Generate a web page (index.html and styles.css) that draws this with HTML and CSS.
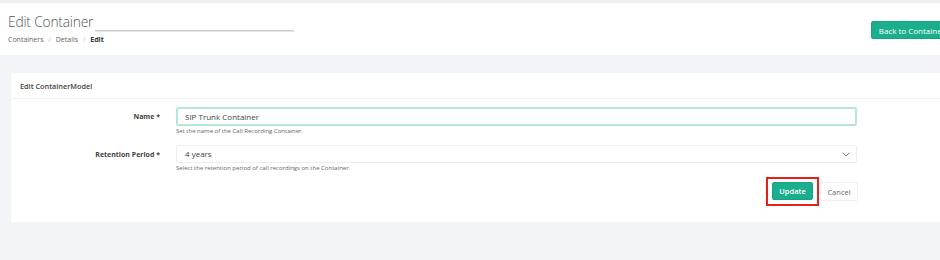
FILE: index.html
```html
<!DOCTYPE html>
<html lang="en">
<head>
<meta charset="utf-8">
<title>Edit Container</title>
<link rel="stylesheet" href="styles.css">
</head>
<body>
<div class="page">
  <div class="topline"></div>
  <header class="page-header">
    <div class="heading">
      <div class="title-row">
        <h1 class="title">Edit Container</h1>
        <span class="title-field"></span>
      </div>
      <nav class="crumbs">
        <a class="crumb">Containers</a>
        <span class="sep">/</span>
        <a class="crumb">Details</a>
        <span class="sep">/</span>
        <span class="crumb current">Edit</span>
      </nav>
    </div>
    <button class="btn btn-primary back-btn">Back to Container</button>
  </header>
  <main class="content">
    <section class="card">
      <div class="card-header">Edit ContainerModel</div>
      <form class="card-body">
        <div class="form-row">
          <label class="form-label">Name *</label>
          <div class="form-field">
            <div class="input input-focus">SIP Trunk Container</div>
            <div class="help">Set the name of the Call Recording Container.</div>
          </div>
        </div>
        <div class="form-row">
          <label class="form-label">Retention Period *</label>
          <div class="form-field">
            <div class="input select">
              <span>4 years</span>
              <svg class="chevron" width="8" height="5" viewBox="0 0 8 5"><path d="M0.5 0.7 L4 4 L7.5 0.7" fill="none" stroke="#777" stroke-width="1"/></svg>
            </div>
            <div class="help">Select the retention period of call recordings on the Container.</div>
          </div>
        </div>
        <div class="form-actions">
          <span class="highlight"><button type="button" class="btn btn-primary update-btn">Update</button></span>
          <button type="button" class="btn btn-light">Cancel</button>
        </div>
      </form>
    </section>
  </main>
</div>
</body>
</html>
```
FILE: styles.css
```css
html, body {
  margin: 0;
  padding: 0;
  overflow: hidden;
}
body {
  background: #f3f4f8;
  font-family: "Open Sans", "DejaVu Sans", sans-serif;
  color: #444;
}
.page {
  width: 980px;
  height: 260px;
  background: #f3f4f8;
}
.topline {
  height: 3px;
  background: #eff0f3;
}
.page-header {
  background: #fff;
  height: 52px;
  display: flex;
  justify-content: space-between;
  align-items: flex-start;
  padding: 0 8px;
  box-sizing: border-box;
}
.heading {
  padding-top: 9px;
}
.title-row {
  display: flex;
  align-items: flex-end;
  height: 19px;
}
.title {
  margin: 0;
  font-size: 13.8px;
  font-weight: 300;
  color: #555;
  line-height: 18px;
  letter-spacing: -0.2px;
}
.title-field {
  display: inline-block;
  width: 199px;
  height: 16px;
  margin-left: 2px;
  border-bottom: 1px solid #c9c9c9;
  box-shadow: 0 1px 0 #e6e6e6;
}
.crumbs {
  margin-top: 4px;
  font-size: 7px;
  line-height: 10px;
  color: #666;
}
.crumb { color: #666; }
.crumb.current { color: #333; font-weight: 700; }
.sep {
  color: #bbb;
  margin: 0 3px;
}
.btn {
  font-family: "Open Sans", "DejaVu Sans", sans-serif;
  border-radius: 2px;
  cursor: pointer;
  padding: 0;
}
.btn-primary {
  background: #1bae8d;
  border: 1px solid #17a383;
  color: #fff;
}
.back-btn {
  margin-top: 18px;
  margin-right: 19px;
  height: 18px;
  padding: 0 7px;
  font-size: 8px;
  white-space: nowrap;
}
.content {
  padding: 18px 0 0 11px;
}
.card {
  background: #fff;
  border-radius: 2px;
  margin-right: -10px;
}
.card-header {
  height: 26px;
  line-height: 26px;
  padding-left: 9px;
  font-size: 7.3px;
  font-weight: 600;
  color: #444;
  border-bottom: 1px solid #f0f0f2;
  box-sizing: border-box;
}
.card-body {
  padding: 8px 0 21px 0;
  margin: 0;
}
.form-row {
  display: grid;
  grid-template-columns: 149px 681px;
  column-gap: 16px;
  margin-bottom: 9px;
}
.form-label {
  text-align: right;
  font-size: 7px;
  font-weight: 700;
  color: #444;
  line-height: 19px;
}
.input {
  height: 19px;
  box-sizing: border-box;
  border: 1px solid #eeeeee;
  border-radius: 2px;
  padding: 0 8px;
  font-size: 8px;
  line-height: 17px;
  color: #444;
}
.input-focus {
  border: 2px solid #b5e6da;
  padding: 0 7px;
  line-height: 15px;
}
.select {
  height: 18px;
  line-height: 16px;
  display: flex;
  justify-content: space-between;
  align-items: center;
}
.chevron { margin-right: -2px; }
.help {
  margin-top: 1px;
  font-size: 6px;
  line-height: 9px;
  color: #666;
}
.form-actions {
  display: flex;
  margin-left: 755px;
  align-items: center;
}
.highlight {
  display: inline-flex;
  border: 2px solid #e8201b;
  padding: 3px 4px 4px 4px;
  margin: -6px 1px -6px 0;
}
.update-btn {
  width: 41px;
  height: 18px;
  font-size: 7.5px;
  font-weight: 600;
}
.btn-light {
  width: 38px;
  height: 19px;
  background: #fff;
  border: 1px solid #eeeeee;
  color: #666;
  font-size: 7.5px;
}
```
